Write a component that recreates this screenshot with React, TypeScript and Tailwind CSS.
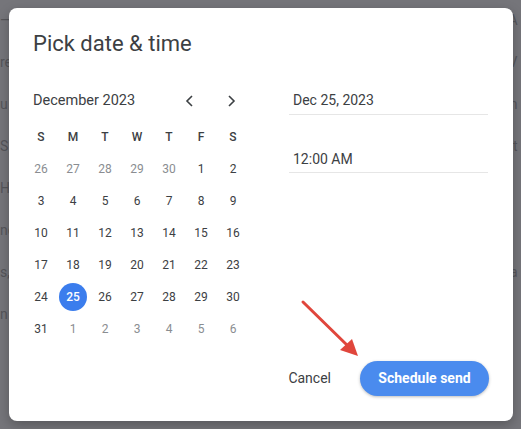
import React from "react";

const weeks: { d: number; muted?: boolean; sel?: boolean }[][] = [
  [{ d: 26, muted: true }, { d: 27, muted: true }, { d: 28, muted: true }, { d: 29, muted: true }, { d: 30, muted: true }, { d: 1 }, { d: 2 }],
  [{ d: 3 }, { d: 4 }, { d: 5 }, { d: 6 }, { d: 7 }, { d: 8 }, { d: 9 }],
  [{ d: 10 }, { d: 11 }, { d: 12 }, { d: 13 }, { d: 14 }, { d: 15 }, { d: 16 }],
  [{ d: 17 }, { d: 18 }, { d: 19 }, { d: 20 }, { d: 21 }, { d: 22 }, { d: 23 }],
  [{ d: 24 }, { d: 25, sel: true }, { d: 26 }, { d: 27 }, { d: 28 }, { d: 29 }, { d: 30 }],
  [{ d: 31 }, { d: 1, muted: true }, { d: 2, muted: true }, { d: 3, muted: true }, { d: 4, muted: true }, { d: 5, muted: true }, { d: 6, muted: true }],
];

const bgLeft = ["—", "re", "u", "S", "H", "nc", "s,", "n"];
const bgRight = ["A", "V", "n", "at", "", "", "a", ""];

export default function App() {
  return (
    <div
      className="relative w-[521px] h-[429px] overflow-hidden bg-[#75757a]"
      style={{ fontFamily: "Roboto, 'Open Sans', sans-serif" }}
    >
      {/* backdrop page content */}
      <div className="flex justify-between h-full text-[14px] text-[#55555a]">
        <div className="flex flex-col gap-[26px] pt-[12px]">
          {bgLeft.map((t, i) => (
            <span key={i} className="leading-[16px]">{t}</span>
          ))}
        </div>
        <div className="flex flex-col gap-[26px] pt-[12px] items-end">
          {bgRight.map((t, i) => (
            <span key={i} className="leading-[16px]">{t}&nbsp;</span>
          ))}
        </div>
      </div>

      {/* dialog */}
      <div className="absolute left-[9px] top-[8px] w-[504px] h-[413px] bg-white rounded-[8px] shadow-[0_4px_12px_rgba(0,0,0,0.25)] flex flex-col text-[#3c4043]">
        <div className="pl-[24px] pt-[22px] text-[22px] leading-[28px] text-[#3c4043]">Pick date &amp; time</div>

        <div className="flex pl-[16px] pt-[33px]">
          {/* calendar */}
          <div className="w-[224px] flex flex-col">
            <div className="flex items-center h-[20px]">
              <span className="pl-[8px] text-[14.5px] w-[157px]">December 2023</span>
              <svg width="16" height="16" viewBox="0 0 16 16">
                <path d="M10 3 L5 8 L10 13" fill="none" stroke="#3c4043" strokeWidth="1.6" />
              </svg>
              <svg width="16" height="16" viewBox="0 0 16 16" className="ml-[25px]">
                <path d="M6 3 L11 8 L6 13" fill="none" stroke="#3c4043" strokeWidth="1.6" />
              </svg>
            </div>
            <div className="grid grid-cols-7 mt-[17px] text-[12px] font-medium text-[#3c4043]">
              {["S", "M", "T", "W", "T", "F", "S"].map((h, i) => (
                <div key={i} className="h-[18px] flex items-center justify-center">{h}</div>
              ))}
            </div>
            <div className="flex flex-col mt-[7px]">
              {weeks.map((w, i) => (
                <div key={i} className="grid grid-cols-7 h-[32px]">
                  {w.map((c, j) => (
                    <div key={j} className="flex items-center justify-center">
                      <span
                        className={
                          "w-[28px] h-[28px] rounded-full flex items-center justify-center text-[12px] " +
                          (c.sel
                            ? "bg-[#3b7ded] text-white font-medium"
                            : c.muted
                            ? "text-[#8a8d91]"
                            : "text-[#3c4043]")
                        }
                      >
                        {c.d}
                      </span>
                    </div>
                  ))}
                </div>
              ))}
            </div>
          </div>

          {/* inputs */}
          <div className="ml-[40px] w-[199px] flex flex-col">
            <div className="h-[24px] border-b border-[#e6e6e6] pl-[4px] text-[14px] leading-[18px]">Dec 25, 2023</div>
            <div className="h-[24px] mt-[34px] border-b border-[#e6e6e6] pl-[4px] text-[14px] leading-[20px]">12:00 AM</div>
          </div>
        </div>

        <div className="mt-auto flex items-center justify-end gap-[21px] pr-[24px] pb-[25px]">
          <button className="text-[14px] text-[#3c4043] px-[8px] h-[36px]">Cancel</button>
          <button className="h-[35px] w-[129px] rounded-full bg-[#4a8bee] text-white text-[14px] font-bold shadow-[0_1px_3px_rgba(60,64,67,0.35)]">
            Schedule send
          </button>
        </div>
      </div>

      {/* red annotation arrow */}
      <svg className="absolute left-0 top-0" width="521" height="429" viewBox="0 0 521 429">
        <line x1="303" y1="302" x2="349" y2="347" stroke="#e0463c" strokeWidth="3" strokeLinecap="round" />
        <polygon points="358,356 340,350 352,339" fill="#e0463c" />
      </svg>
    </div>
  );
}
